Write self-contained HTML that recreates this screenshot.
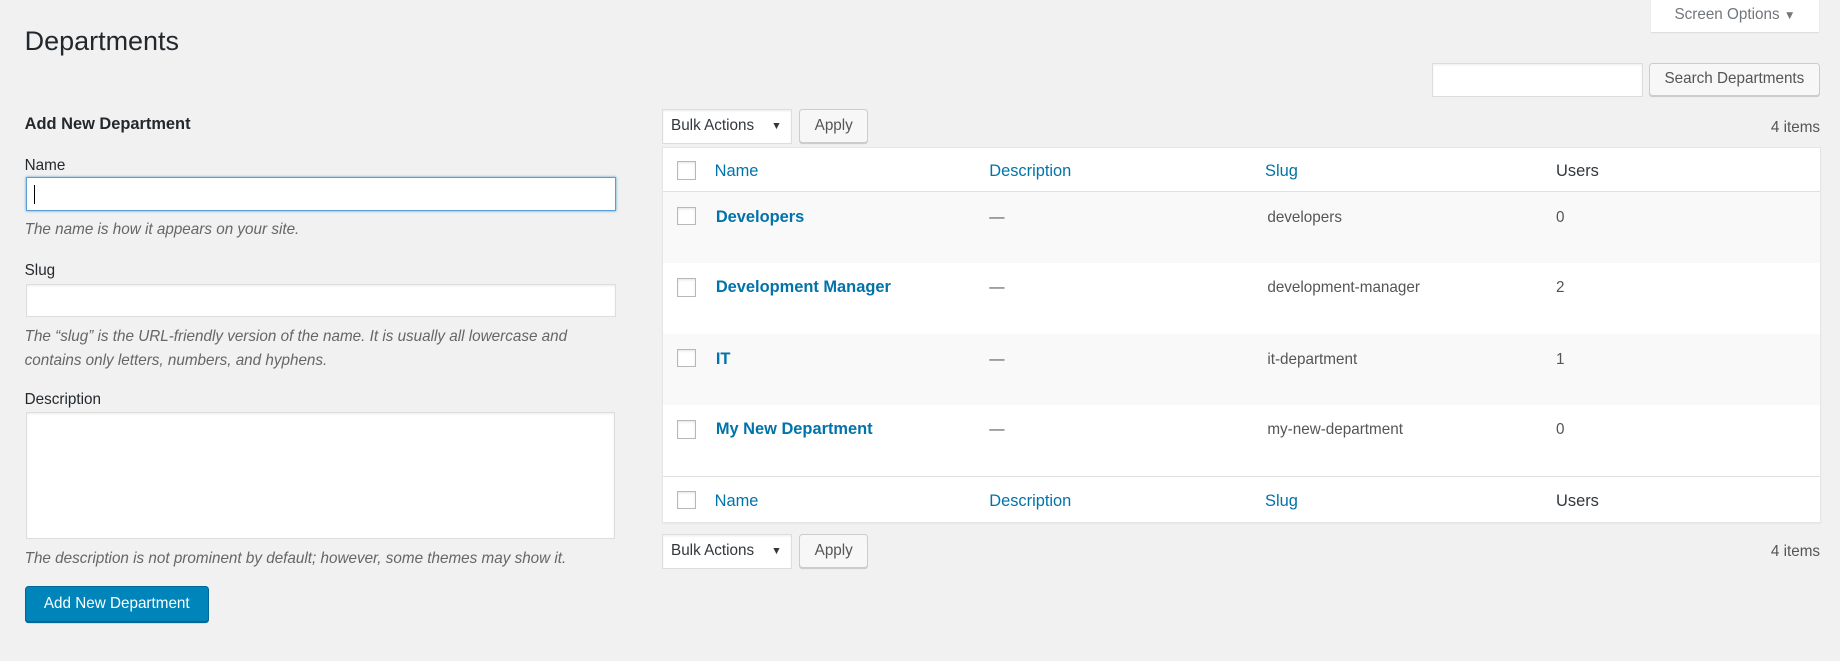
<!DOCTYPE html>
<html><head><meta charset="utf-8"><style>
html{zoom:1.17347}
body{margin:0;width:1568px;height:563px;background:#f1f1f1;font-family:"Liberation Sans",sans-serif;font-size:13px;color:#23282d;position:relative;overflow:hidden}
.a{position:absolute;white-space:nowrap}
.in{position:absolute;background:#fff;border:1px solid #ddd;box-shadow:inset 0 1px 2px rgba(0,0,0,.07);box-sizing:border-box}
.btn{position:absolute;background:#f7f7f7;border:1px solid #ccc;border-radius:3px;box-shadow:0 1px 0 #ccc;box-sizing:border-box;color:#555;text-align:center}
.help{color:#666;font-style:italic}
.cb{position:absolute;width:16px;height:16px;border:1px solid #b4b9be;background:#fff;box-sizing:border-box;box-shadow:inset 0 1px 2px rgba(0,0,0,.1)}
.lnk{color:#0073aa}
.row{position:absolute;left:565px;width:986px}
</style></head><body>
<div class="a" style="left:1407px;top:-1px;width:143px;height:28px;background:#fff;box-shadow:0 1px 1px rgba(0,0,0,.1);color:#72777c;line-height:28px;text-align:center">Screen Options <span style="font-size:10px">▼</span></div>
<div class="a" style="left:21px;top:22px;font-size:23px;color:#23282d">Departments</div>
<div class="in" style="left:1220px;top:54px;width:180px;height:29px"></div>
<div class="btn" style="left:1405px;top:54px;width:146px;height:28px;line-height:26px">Search Departments</div>

<div class="a" style="left:21px;top:98px;font-size:14px;font-weight:bold">Add New Department</div>
<div class="a" style="left:21px;top:134px">Name</div>
<div class="in" style="left:22px;top:151px;width:503px;height:29px;border-color:#5b9dd9;box-shadow:0 0 2px rgba(30,140,190,.8)"><div style="position:absolute;left:6px;top:6px;width:1px;height:16px;background:#000"></div></div>
<div class="a help" style="left:21px;top:188px">The name is how it appears on your site.</div>
<div class="a" style="left:21px;top:223px">Slug</div>
<div class="in" style="left:22px;top:242px;width:503px;height:28px"></div>
<div class="a help" style="left:21px;top:277px;line-height:20px">The “slug” is the URL-friendly version of the name. It is usually all lowercase and<br>contains only letters, numbers, and hyphens.</div>
<div class="a" style="left:21px;top:333px">Description</div>
<div class="in" style="left:22px;top:351px;width:502px;height:108px"></div>
<div class="a help" style="left:21px;top:469px">The description is not prominent by default; however, some themes may show it.</div>
<div class="a" style="left:21px;top:499px;width:157px;height:31px;background:#0085ba;border:1px solid #006799;box-sizing:border-box;border-radius:3px;box-shadow:0 1px 0 #006799;color:#fff;text-align:center;line-height:29px">Add New Department</div>

<div class="in" style="left:564px;top:93px;width:111px;height:30px;line-height:28px;padding-left:7px;color:#32373c">Bulk Actions <span style="font-size:9px;position:absolute;right:8px">▼</span></div>
<div class="btn" style="left:681px;top:93px;width:59px;height:29px;line-height:27px">Apply</div>
<div class="a" style="right:17px;top:101px;color:#555">4 items</div>

<div class="a" style="left:564px;top:125px;width:988px;height:321px;background:#fff;border:1px solid #e5e5e5;box-sizing:border-box;box-shadow:0 1px 1px rgba(0,0,0,.04)"></div>
<div class="row" style="top:126px;height:37px;border-bottom:1px solid #e1e1e1"></div>
<div class="row" style="top:164px;height:60px;background:#f9f9f9"></div>
<div class="row" style="top:285px;height:60px;background:#f9f9f9"></div>
<div class="row" style="top:406px;height:39px;border-top:1px solid #e1e1e1"></div>

<div class="cb" style="left:577px;top:137px"></div>
<div class="a lnk" style="left:609px;top:138px;font-size:14px">Name</div>
<div class="a lnk" style="left:843px;top:138px;font-size:14px">Description</div>
<div class="a lnk" style="left:1078px;top:138px;font-size:14px">Slug</div>
<div class="a" style="left:1326px;top:138px;font-size:14px;color:#32373c">Users</div>

<div class="cb" style="left:577px;top:176px"></div>
<div class="a lnk" style="left:610px;top:177px;font-size:14px;font-weight:bold">Developers</div>
<div class="a" style="left:843px;top:178px;color:#555">—</div>
<div class="a" style="left:1080px;top:178px;color:#555">developers</div>
<div class="a" style="left:1326px;top:178px;color:#555">0</div>

<div class="cb" style="left:577px;top:237px"></div>
<div class="a lnk" style="left:610px;top:237px;font-size:14px;font-weight:bold">Development Manager</div>
<div class="a" style="left:843px;top:238px;color:#555">—</div>
<div class="a" style="left:1080px;top:238px;color:#555">development-manager</div>
<div class="a" style="left:1326px;top:238px;color:#555">2</div>

<div class="cb" style="left:577px;top:297px"></div>
<div class="a lnk" style="left:610px;top:298px;font-size:14px;font-weight:bold">IT</div>
<div class="a" style="left:843px;top:299px;color:#555">—</div>
<div class="a" style="left:1080px;top:299px;color:#555">it-department</div>
<div class="a" style="left:1326px;top:299px;color:#555">1</div>

<div class="cb" style="left:577px;top:358px"></div>
<div class="a lnk" style="left:610px;top:358px;font-size:14px;font-weight:bold">My New Department</div>
<div class="a" style="left:843px;top:359px;color:#555">—</div>
<div class="a" style="left:1080px;top:359px;color:#555">my-new-department</div>
<div class="a" style="left:1326px;top:359px;color:#555">0</div>

<div class="cb" style="left:577px;top:418px"></div>
<div class="a lnk" style="left:609px;top:419px;font-size:14px">Name</div>
<div class="a lnk" style="left:843px;top:419px;font-size:14px">Description</div>
<div class="a lnk" style="left:1078px;top:419px;font-size:14px">Slug</div>
<div class="a" style="left:1326px;top:419px;font-size:14px;color:#32373c">Users</div>

<div class="in" style="left:564px;top:455px;width:111px;height:30px;line-height:28px;padding-left:7px;color:#32373c">Bulk Actions <span style="font-size:9px;position:absolute;right:8px">▼</span></div>
<div class="btn" style="left:681px;top:455px;width:59px;height:29px;line-height:27px">Apply</div>
<div class="a" style="right:17px;top:463px;color:#555">4 items</div>
</body></html>
